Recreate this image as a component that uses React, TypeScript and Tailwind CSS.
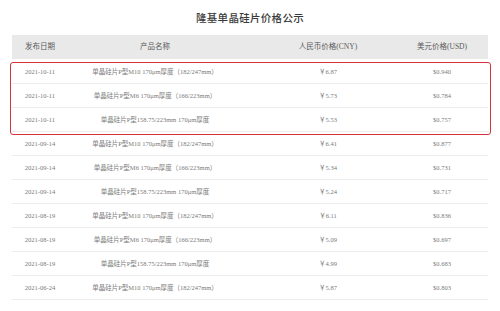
const rows = [
  { date: '2021-10-11', name: '单晶硅片P型M10 170μm厚度（182/247mm）', cny: '￥6.87', usd: '$0.940' },
  { date: '2021-10-11', name: '单晶硅片P型M6 170μm厚度（166/223mm）', cny: '￥5.73', usd: '$0.784' },
  { date: '2021-10-11', name: '单晶硅片P型158.75/223mm 170μm厚度', cny: '￥5.53', usd: '$0.757' },
  { date: '2021-09-14', name: '单晶硅片P型M10 170μm厚度（182/247mm）', cny: '￥6.41', usd: '$0.877' },
  { date: '2021-09-14', name: '单晶硅片P型M6 170μm厚度（166/223mm）', cny: '￥5.34', usd: '$0.731' },
  { date: '2021-09-14', name: '单晶硅片P型158.75/223mm 170μm厚度', cny: '￥5.24', usd: '$0.717' },
  { date: '2021-08-19', name: '单晶硅片P型M10 170μm厚度（182/247mm）', cny: '￥6.11', usd: '$0.836' },
  { date: '2021-08-19', name: '单晶硅片P型M6 170μm厚度（166/223mm）', cny: '￥5.09', usd: '$0.697' },
  { date: '2021-08-19', name: '单晶硅片P型158.75/223mm 170μm厚度', cny: '￥4.99', usd: '$0.683' },
  { date: '2021-06-24', name: '单晶硅片P型M10 170μm厚度（182/247mm）', cny: '￥5.87', usd: '$0.803' },
];

const cols = 'grid grid-cols-[56px_174px_172px_56px] items-center';

function Row({ r }: { r: (typeof rows)[number] }) {
  return (
    <div className={`${cols} h-6 border-b border-[#ececec] text-[6.5px] text-[#7a7a7a]`}>
      <div className="text-center">{r.date}</div>
      <div className="text-center whitespace-nowrap">{r.name}</div>
      <div className="text-center">{r.cny}</div>
      <div className="text-center">{r.usd}</div>
    </div>
  );
}

export default function App() {
  return (
    <div className="w-[500px] h-[311px] bg-white overflow-hidden font-['Liberation_Serif','Noto_Sans_CJK_SC',serif]">
      {/* Title */}
      <h1 className="pt-[11px] h-[35px] text-center text-[10.5px] font-medium text-[#3a3a3a] tracking-[0.3px]">
        隆基单晶硅片价格公示
      </h1>

      <div className="mx-3">
        {/* Header */}
        <div className={`${cols} h-6 bg-[#e9e9e9] text-[7.5px] text-[#5a5a5a]`}>
          <div className="text-center">发布日期</div>
          <div className="text-center">产品名称</div>
          <div className="text-center">人民币价格(CNY)</div>
          <div className="text-center">美元价格(USD)</div>
        </div>

        <div className="mt-px">
          {/* Highlighted latest rows */}
          <div className="relative">
            {rows.slice(0, 3).map((r, i) => (
              <Row key={i} r={r} />
            ))}
            <div className="absolute top-[2px] bottom-[-3px] left-[-2px] right-[-3px] border-[1.5px] border-[#d6323c] rounded-[3px]" />
          </div>
          {rows.slice(3).map((r, i) => (
            <Row key={i} r={r} />
          ))}
        </div>
      </div>
    </div>
  );
}
